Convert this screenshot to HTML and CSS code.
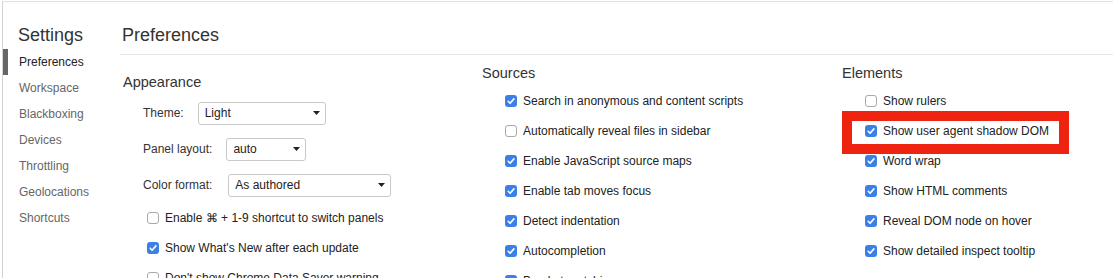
FILE: index.html
```html
<!DOCTYPE html>
<html lang="en">
  <head>
    <meta charset="UTF-8" />
    <meta name="viewport" content="width=device-width, initial-scale=1.0" />
    <title>Settings - Preferences</title>
    <link rel="stylesheet" href="styles.css">
  </head>
  <body>
    <div class="window">
      <!-- Settings tabs -->
      <aside class="sidebar">
        <h1 class="sidebar-title">Settings</h1>
        <ul class="tabs">
          <li class="tab tab-selected">Preferences</li>
          <li class="tab">Workspace</li>
          <li class="tab">Blackboxing</li>
          <li class="tab">Devices</li>
          <li class="tab">Throttling</li>
          <li class="tab">Geolocations</li>
          <li class="tab">Shortcuts</li>
        </ul>
      </aside>

      <main class="panel">
        <h2 class="panel-title">Preferences</h2>

        <div class="columns">
          <section class="group group-appearance">
            <h3 class="group-title">Appearance</h3>

            <div class="field">
              <span class="field-label">Theme:</span>
              <div class="select select-theme">
                <span>Light</span>
                <svg class="caret" width="7" height="4" viewBox="0 0 7 4"><path d="M0 0h7L3.5 4z" fill="#222"/></svg>
              </div>
            </div>
            <div class="field">
              <span class="field-label">Panel layout:</span>
              <div class="select select-layout">
                <span>auto</span>
                <svg class="caret" width="7" height="4" viewBox="0 0 7 4"><path d="M0 0h7L3.5 4z" fill="#222"/></svg>
              </div>
            </div>
            <div class="field">
              <span class="field-label">Color format:</span>
              <div class="select select-color">
                <span>As authored</span>
                <svg class="caret" width="7" height="4" viewBox="0 0 7 4"><path d="M0 0h7L3.5 4z" fill="#222"/></svg>
              </div>
            </div>

            <div class="check"><span class="box"></span>Enable ⌘ + 1-9 shortcut to switch panels</div>
            <div class="check"><span class="box box-on"><svg width="12" height="12" viewBox="0 0 12 12"><path d="M3.2 6.3l1.9 1.9 3.8-4.3" fill="none" stroke="#fff" stroke-width="1.6" stroke-linecap="round" stroke-linejoin="round"/></svg></span>Show What's New after each update</div>
            <div class="check"><span class="box"></span>Don't show Chrome Data Saver warning</div>
          </section>

          <section class="group">
            <h3 class="group-title">Sources</h3>
            <div class="check"><span class="box box-on"><svg width="12" height="12" viewBox="0 0 12 12"><path d="M3.2 6.3l1.9 1.9 3.8-4.3" fill="none" stroke="#fff" stroke-width="1.6" stroke-linecap="round" stroke-linejoin="round"/></svg></span>Search in anonymous and content scripts</div>
            <div class="check"><span class="box"></span>Automatically reveal files in sidebar</div>
            <div class="check"><span class="box box-on"><svg width="12" height="12" viewBox="0 0 12 12"><path d="M3.2 6.3l1.9 1.9 3.8-4.3" fill="none" stroke="#fff" stroke-width="1.6" stroke-linecap="round" stroke-linejoin="round"/></svg></span>Enable JavaScript source maps</div>
            <div class="check"><span class="box box-on"><svg width="12" height="12" viewBox="0 0 12 12"><path d="M3.2 6.3l1.9 1.9 3.8-4.3" fill="none" stroke="#fff" stroke-width="1.6" stroke-linecap="round" stroke-linejoin="round"/></svg></span>Enable tab moves focus</div>
            <div class="check"><span class="box box-on"><svg width="12" height="12" viewBox="0 0 12 12"><path d="M3.2 6.3l1.9 1.9 3.8-4.3" fill="none" stroke="#fff" stroke-width="1.6" stroke-linecap="round" stroke-linejoin="round"/></svg></span>Detect indentation</div>
            <div class="check"><span class="box box-on"><svg width="12" height="12" viewBox="0 0 12 12"><path d="M3.2 6.3l1.9 1.9 3.8-4.3" fill="none" stroke="#fff" stroke-width="1.6" stroke-linecap="round" stroke-linejoin="round"/></svg></span>Autocompletion</div>
            <div class="check"><span class="box box-on"><svg width="12" height="12" viewBox="0 0 12 12"><path d="M3.2 6.3l1.9 1.9 3.8-4.3" fill="none" stroke="#fff" stroke-width="1.6" stroke-linecap="round" stroke-linejoin="round"/></svg></span>Bracket matching</div>
          </section>

          <section class="group group-last">
            <h3 class="group-title">Elements</h3>
            <div class="check"><span class="box"></span>Show rulers</div>
            <div class="check check-marked">
              <span class="box box-on"><svg width="12" height="12" viewBox="0 0 12 12"><path d="M3.2 6.3l1.9 1.9 3.8-4.3" fill="none" stroke="#fff" stroke-width="1.6" stroke-linecap="round" stroke-linejoin="round"/></svg></span>Show user agent shadow DOM
              <!-- red annotation frame -->
              <span class="highlight"></span>
            </div>
            <div class="check"><span class="box box-on"><svg width="12" height="12" viewBox="0 0 12 12"><path d="M3.2 6.3l1.9 1.9 3.8-4.3" fill="none" stroke="#fff" stroke-width="1.6" stroke-linecap="round" stroke-linejoin="round"/></svg></span>Word wrap</div>
            <div class="check"><span class="box box-on"><svg width="12" height="12" viewBox="0 0 12 12"><path d="M3.2 6.3l1.9 1.9 3.8-4.3" fill="none" stroke="#fff" stroke-width="1.6" stroke-linecap="round" stroke-linejoin="round"/></svg></span>Show HTML comments</div>
            <div class="check"><span class="box box-on"><svg width="12" height="12" viewBox="0 0 12 12"><path d="M3.2 6.3l1.9 1.9 3.8-4.3" fill="none" stroke="#fff" stroke-width="1.6" stroke-linecap="round" stroke-linejoin="round"/></svg></span>Reveal DOM node on hover</div>
            <div class="check"><span class="box box-on"><svg width="12" height="12" viewBox="0 0 12 12"><path d="M3.2 6.3l1.9 1.9 3.8-4.3" fill="none" stroke="#fff" stroke-width="1.6" stroke-linecap="round" stroke-linejoin="round"/></svg></span>Show detailed inspect tooltip</div>
          </section>
        </div>
      </main>
    </div>
  </body>
</html>
```

FILE: styles.css
```css
html,
body {
  height: 100%;
}

body {
  margin: 0;
  padding: 0;
  font-family: 'Liberation Sans', Arial, sans-serif;
  background-color: #ffffff;
  color: #222;
  overflow: hidden;
}

/* Outer frame of the settings window */
.window {
  display: flex;
  margin: 1px 0 0 2px;
  height: calc(100% - 1px);
  box-sizing: border-box;
  border-top: 1px solid #e2e2e2;
  border-left: 1px solid #d2d2d2;
  overflow: hidden;
}

/* Sidebar */
.sidebar {
  width: 117px;
  flex-shrink: 0;
  padding-top: 22px;
}

.sidebar-title {
  font-size: 18px;
  font-weight: 400;
  line-height: 22px;
  color: #333;
  margin: 0 0 3px;
  padding-left: 15px;
}

.tabs {
  list-style: none;
  margin: 0;
  padding: 0;
}

.tab {
  height: 26px;
  line-height: 26px;
  font-size: 12px;
  color: #666;
  padding-left: 16px;
}

.tab-selected {
  color: #222;
  border-left: 5px solid #666;
  padding-left: 11px;
}

/* Main panel */
.panel {
  flex: 1;
  min-width: 0;
  padding-top: 22px;
  overflow: hidden;
}

.panel-title {
  font-size: 18px;
  font-weight: 400;
  line-height: 22px;
  color: #333;
  margin: 0;
  padding: 0 0 8px 2px;
  border-bottom: 1px solid #e6e6e6;
}

.columns {
  display: flex;
}

.group {
  width: 360px;
  flex-shrink: 0;
  padding-left: 2px;
  box-sizing: border-box;
}

.group-last {
  width: auto;
  flex: 1;
  min-width: 0;
}

.group-title {
  font-size: 14.5px;
  font-weight: 400;
  line-height: 18px;
  color: #333;
  margin: 9px 0 4px;
}

.group-appearance {
  padding-left: 3px;
}

.group-appearance .group-title {
  margin-top: 18px;
}

/* Select rows */
.field {
  display: flex;
  align-items: center;
  height: 36px;
  padding-left: 20px;
  font-size: 12px;
  color: #333;
}

.field-label {
  margin-right: 14px;
}

.select {
  display: flex;
  align-items: center;
  justify-content: space-between;
  height: 23px;
  box-sizing: border-box;
  padding: 0 5px 0 6px;
  border: 1px solid #c9c9c9;
  border-radius: 3px;
  background-color: #fff;
  color: #222;
}

.select-theme {
  width: 128px;
}

.select-layout {
  width: 80px;
}

.select-color {
  width: 163px;
  margin-left: 2px;
}

/* Checkbox rows */
.check {
  display: flex;
  align-items: center;
  height: 30px;
  padding-left: 23px;
  font-size: 12px;
  color: #222;
  white-space: nowrap;
}

.group-appearance .check {
  padding-left: 24px;
}

.box {
  width: 12px;
  height: 12px;
  box-sizing: border-box;
  margin-right: 6px;
  border: 1px solid #a9a9a9;
  border-radius: 3px;
  background-color: #fff;
  flex-shrink: 0;
}

.box-on {
  border: none;
  background-color: #3a80e6;
}

.box-on svg {
  display: block;
}

/* Red annotation around one option */
.check-marked {
  position: relative;
}

.highlight {
  position: absolute;
  left: 0;
  top: -5px;
  width: 227px;
  height: 43px;
  box-sizing: border-box;
  border: 10px solid #ee2310;
}
```
